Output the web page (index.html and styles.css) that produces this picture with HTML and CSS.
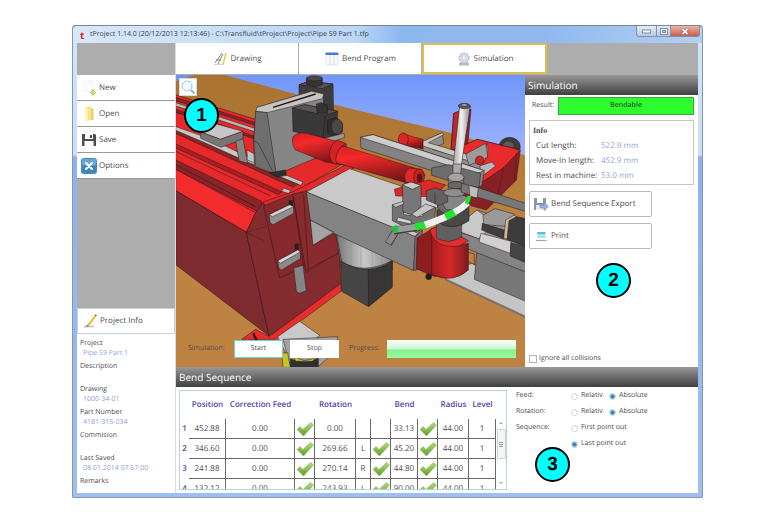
FILE: index.html
```html
<!DOCTYPE html>
<html lang="en">
<head>
  <meta charset="UTF-8">
  <meta name="viewport" content="width=device-width, initial-scale=1.0">
  <title>tProject 1.14.0</title>
  <link rel="stylesheet" href="styles.css">
</head>
<body>
  <svg class="defs" width="0" height="0" aria-hidden="true">
    <defs>
      <linearGradient id="tickFill" x1="0" y1="0" x2="0" y2="1">
        <stop offset="0" stop-color="#b4dc74"/>
        <stop offset="1" stop-color="#5f9c30"/>
      </linearGradient>
      <symbol id="tick" viewBox="0 0 18 16">
        <path d="M1 8.500 4 5.500 7 8.500 14.500 1.500 17.500 4 7.500 15z" fill="url(#tickFill)" stroke="#7fb04e" stroke-width=".5"/>
      </symbol>
    </defs>
  </svg>

  <div class="window">
    <header class="titlebar">
      <span class="app-mark">t</span>
      <h1 class="app-title">tProject 1.14.0 (20/12/2013 12:13:46) - C:\Transfluid\tProject\Project\Pipe 59 Part 1.tfp</h1>
      <div class="window-controls">
        <button class="win-btn win-min" aria-label="Minimize"><svg width="9" height="5" viewBox="0 0 9 5"><rect x=".5" y="1" width="8" height="3" fill="#fff" stroke="#7c8ca3"/></svg></button>
        <button class="win-btn win-max" aria-label="Maximize"><svg width="8" height="7" viewBox="0 0 8 7"><rect x=".5" y=".5" width="7" height="6" fill="#fff" stroke="#7c8ca3"/><rect x="2.500" y="2.500" width="3" height="2" fill="#b8c8da" stroke="#7c8ca3"/></svg></button>
        <button class="win-btn win-close" aria-label="Close"><svg width="8" height="7" viewBox="0 0 8 7"><path d="M1.500 1 6.500 6M6.500 1 1.500 6" stroke="#7a4a4a" stroke-width="3"/><path d="M1.500 1 6.500 6M6.500 1 1.500 6" stroke="#fff" stroke-width="1.800"/></svg></button>
      </div>
    </header>

    <div class="app">
      <aside class="sidebar">
        <nav class="side-menu">
          <button class="side-btn">
            <svg class="icon" viewBox="0 0 16 16"><path d="M3 1h9v10H3z" fill="#fcfcfc" stroke="#f2f2f2"/><path d="M12 9 15 12.500 12 16 9 12.500z" fill="#a9cf45"/><path d="M12 10.500v4M10 12.500h4" stroke="#d3e68c"/></svg>
            New</button>
          <button class="side-btn">
            <svg class="icon" viewBox="0 0 16 16"><path d="M4 1.500 10 0v14l-6 1.500z" fill="#f8e48d"/><path d="M10 2l2.500.8V14L10 14z" fill="#e9cf70"/><path d="M4 1.500 7 3v12.500L4 15z" fill="#fdf3bb"/></svg>
            Open</button>
          <button class="side-btn">
            <svg class="icon" viewBox="0 0 16 16"><path d="M1 2h13l1 1v11H1z" fill="#4a4d52"/><path d="M4 2h8v5H4z" fill="#fff"/><path d="M9 3h2v3H9z" fill="#4a4d52"/><path d="M3.500 9h9v5h-9z" fill="#fff"/></svg>
            Save</button>
          <button class="side-btn">
            <svg class="icon" viewBox="0 0 16 16"><rect x=".5" y=".5" width="15" height="15" rx="2" fill="#3f86bd" stroke="#4a88b8"/><path d="M1 1h14v6Q8 9 1 7z" fill="#6aa6d2"/><path d="M5 5 11 11M11 5 5 11" stroke="#fff" stroke-width="2" stroke-linecap="round"/></svg>
            Options</button>
        </nav>
        <button class="side-btn project-btn">
          <svg class="icon" viewBox="0 0 16 16"><path d="M2 13.500h10" stroke="#c9c9c9" stroke-width="2"/><path d="M5 12 12.500 2.500l1.500 1.300L7 13z" fill="#f0bd2e"/><path d="M12.500 2.500l1.500 1.300.8-1.200L13.400 1.300z" fill="#c24a32"/><path d="M5 12l2 1-2.800.7z" fill="#555"/></svg>
          Project Info</button>
        <dl class="project-info">
          <dt>Project</dt><dd>Pipe 59 Part 1</dd>
          <dt>Description</dt><dd></dd>
          <dt>Drawing</dt><dd>1000-34-01</dd>
          <dt>Part Number</dt><dd>4181-315-034</dd>
          <dt>Commision</dt><dd></dd>
          <dt>Last Saved</dt><dd>08.01.2014 07:57:00</dd>
          <dt>Remarks</dt>
        </dl>
      </aside>

      <main class="workspace">
        <nav class="tabs">
          <button class="tab">
            <svg class="icon" viewBox="0 0 16 16"><path d="M2 12 9 2M5 13 10 3M3 9h5" stroke="#777" fill="none" stroke-width=".9"/><path d="M10 13.500 13 2" stroke="#e6d13c" stroke-width="1.500"/><path d="M1 13.500h9" stroke="#d5d5d5"/></svg>
            Drawing</button>
          <button class="tab">
            <svg class="icon" viewBox="0 0 16 16"><path d="M2 3h4v11H2zM6 3h4v11H6zM10 3h4v11h-4z" fill="#f8fafd" stroke="#d5dbe6" stroke-width=".7"/><path d="M1.500 1.500h13v2.500h-13z" fill="#3f7ecb"/></svg>
            Bend Program</button>
          <button class="tab tab-active">
            <svg class="icon" viewBox="0 0 16 16"><path d="M3 12q5-2 10 0l0 2.500H3z" fill="#b5b9c2"/><circle cx="8" cy="7" r="4.800" fill="#dfe5ef" stroke="#bcc5d4" stroke-width="1.800" stroke-dasharray="2.200 .8"/><circle cx="8" cy="7" r="2.300" fill="#f5f8fc" stroke="#b9c6dc"/></svg>
            Simulation</button>
        </nav>

        <div class="stage">
          <section class="viewport">
            <svg class="scene" viewBox="1 15 1047 876" role="img" aria-label="Bending machine">
              <defs>
                <linearGradient id="sky" x1="0" y1="0" x2="0" y2="1"><stop offset="0" stop-color="#6f95fb"/><stop offset="1" stop-color="#a0b4fd"/></linearGradient>
                <linearGradient id="ground" x1="0" y1="0" x2="0" y2="1"><stop offset="0" stop-color="#a9722f"/><stop offset=".6" stop-color="#bf8443"/><stop offset="1" stop-color="#bd8241"/></linearGradient>
                <linearGradient id="tube" x1="0" y1="0" x2=".35" y2="1"><stop offset="0" stop-color="#d81e20"/><stop offset=".35" stop-color="#f5292a"/><stop offset="1" stop-color="#7d1618"/></linearGradient>
                <linearGradient id="drum" x1="0" y1="0" x2="1" y2="0"><stop offset="0" stop-color="#747474"/><stop offset=".5" stop-color="#c9c9c9"/><stop offset="1" stop-color="#8a8a8a"/></linearGradient>
                <linearGradient id="redDrum" x1="0" y1="0" x2="1" y2="0"><stop offset="0" stop-color="#a01c1f"/><stop offset=".5" stop-color="#d8282a"/><stop offset="1" stop-color="#7b1b1d"/></linearGradient>
                <linearGradient id="rod" x1="0" y1="0" x2="1" y2="0"><stop offset="0" stop-color="#a5a5a5"/><stop offset=".5" stop-color="#f0f0f0"/><stop offset="1" stop-color="#8b8b8b"/></linearGradient>
              </defs>
              <rect x="0" y="0" width="1050" height="900" fill="url(#ground)"/>
              <path d="M130 10H1050V256L830 190 480 105z" fill="url(#sky)"/>
              <path d="M0 10H70L0 34z" fill="#6f92fb"/>

              <g stroke="#2a1414" stroke-width="1.500" stroke-linejoin="round">
                <!-- machine bed -->
                <path d="M0 74 240 148 350 262 520 270 350 372 258 402 212 487 0 362z" fill="#e62a2c"/>
                <path d="M0 82 240 158V166L0 92z" fill="#8a2528"/>
                <path d="M0 98 240 176V186L0 108z" fill="#b9b9b9"/>
                <path d="M0 118 240 200V208L0 127z" fill="#7d2226"/>
                <path d="M0 172 370 340 352 352 0 190z" fill="#8a2528"/>
                <path d="M0 170 100 205 232 268 270 290V300L225 280 96 222 0 181z" fill="#c8c8c8"/>
                <path d="M0 222 320 366 308 374 0 234z" fill="#a82024"/>
                <path d="M0 244 285 378" fill="none"/>
                <path d="M0 270 258 394 252 428 0 298z" fill="#8b2428"/>
                <path d="M0 284 240 410" fill="none"/>
                <path d="M0 298 240 428 212 487 0 362z" fill="#f22b2d"/>
                <path d="M0 362 212 487 280 798 0 584z" fill="#7e2b30"/>
                <path d="M212 487 240 428 258 402 350 368 395 362 490 500 496 645 280 798z" fill="#842b30"/>
                <path d="M262 396 350 366 520 280 540 292 396 366 380 372 268 408z" fill="#e12a2c"/>
                <path d="M212 487 270 470M212 487 265 512M390 610 490 545" fill="none" stroke-width="1"/>
                <path d="M264 408 352 372 384 590 312 624z" fill="#86282c"/>
                <path d="M352 372 394 362 410 470 484 490 490 548 390 602z" fill="#8a2a2e"/>
                <path d="M384 376 398 596" fill="none"/>
                <path d="M496 640V664L300 808H198L240 778 280 800z" fill="#e82c2e"/>
                <path d="M233 790 243 812" stroke-width="7"/>

                <!-- brackets -->
                <path d="M280 434 342 404 354 410V430L292 464 283 458z" fill="#8f8f8f"/><path d="M280 434 342 404 354 410 290 440z" fill="#d4d4d4"/>
                <path d="M306 572 366 540 374 546V566L318 600 310 596z" fill="#8a8a8a"/><path d="M306 572 366 540 374 546 314 580z" fill="#d4d4d4"/>
                <path d="M354 594 382 586 392 662 372 670 362 664z" fill="#858585"/>
                <path d="M340 392h12v12h-12zM358 522h10v16h-10z" fill="#222"/>
                <path d="M75 186 100 156 202 184 134 208z" fill="#c6c6c6"/>
                <path d="M75 186 134 208 202 184V208L136 232 75 205z" fill="#777"/>
                <path d="M180 214 202 206 216 280 190 272z" fill="#858585"/>
                <path d="M214 240 285 278V300L215 270z" fill="#c2c2c2"/>
                <path d="M318 364 324 354 346 362 338 370zM314 308 382 336 376 346 308 318z" fill="#c2c2c2"/>

                <!-- back plate and servo blocks -->
                <path d="M370 44 400 34 472 42 474 140 370 122z" fill="#3c3c3c"/>
                <path d="M370 44 400 34 472 42 440 56z" fill="#555"/>
                <path d="M392 24v20q24 12 48 0V24z" fill="#333"/><ellipse cx="416" cy="25" rx="24" ry="8" fill="#484848"/>
                <path d="M244 112 408 64 444 72 440 256 302 314 236 290 234 210z" fill="#868686"/>
                <path d="M244 112 408 64 444 72 440 86 274 128 240 124z" fill="#c4c4c4"/>
                <path d="M240 124 274 128 302 314 240 290 234 212z" fill="#6e6e6e"/>
                <path d="M292 112 420 72" stroke-width="4"/><path d="M234 212 248 220 290 302" fill="none"/>
                <path d="M280 308 330 300 332 316 304 322z" fill="#26302e"/>
                <path d="M350 114 388 104 486 124 482 194 438 206 352 184z" fill="#393939"/>
                <path d="M350 114 388 104 486 124 448 136z" fill="#565656"/><path d="M448 136 442 204" fill="none"/>
                <path d="M422 102 436 98 456 106V132L424 128z" fill="#333"/>
                <path d="M455 150 482 142 500 160V186L478 198 456 190z" fill="#2d2d2d"/><ellipse cx="484" cy="170" rx="17" ry="23" fill="#484848"/>
                <path d="M440 206 505 190 508 202 470 216z" fill="#989898"/>

                <!-- table block and motor below -->
                <path d="M480 490 650 560V600H498z" fill="#777"/>
                <path d="M480 480 498 574Q560 616 650 572V540z" fill="url(#drum)"/>
                <path d="M526 510v78M556 520v76M590 540v56M618 550v38" stroke="#888" stroke-width="1"/>
                <path d="M496 574Q540 600 578 598L579 710 498 664z" fill="#454545"/>
                <path d="M578 598Q620 594 650 572V652L579 710z" fill="#363636"/>
                <path d="M392 366 522 296 800 390 718 500z" fill="#c9c9c9"/>
                <path d="M392 366 720 500 714 602 474 490 412 526 404 450z" fill="#838383"/>
                <path d="M718 500 740 480 730 598 714 602z" fill="#707070"/>
                <path d="M404 450 474 486 412 526z" fill="#a4a4a4"/><path d="M404 450 474 488" fill="none" stroke-width="1"/>

                <!-- rear arm -->
                <ellipse cx="1002" cy="230" rx="32" ry="28" fill="#3c3c3c"/><ellipse cx="998" cy="228" rx="18" ry="15" fill="#5c5c5c"/>
                <path d="M834 130 886 118 874 248 826 240z" fill="#8f1f22"/><path d="M834 130 852 122 846 240 826 240z" fill="#c02629"/>
                <path d="M820 246 905 208 1034 240 1022 330 932 420 860 400z" fill="#872024"/>
                <path d="M820 246 905 208 1034 240 985 292 914 340 840 300z" fill="#ea2b2d"/>
                <path d="M985 290 966 376M1022 250 1016 338" fill="none" stroke-width="1"/>
                <path d="M680 190 710 200 742 208V236L708 230 678 224z" fill="url(#tube)"/><ellipse cx="683" cy="208" rx="15" ry="19" fill="#d82729"/>
                <path d="M742 214 800 188 804 220 770 238 924 282 912 310 742 244z" fill="#8e8e8e"/>
                <path d="M742 214 800 188 804 194 758 218 918 266 936 220V250L920 286 742 228z" fill="#c8c8c8"/>
                <path d="M870 252 930 220 936 262 880 286z" fill="#9b9b9b"/><path d="M912 288 948 276 960 288 920 318z" fill="#b8b8b8"/>
                <circle cx="912" cy="271" r="13" fill="#c72527"/>
                <path d="M554 202 592 194 926 302 918 350 556 234z" fill="#838383"/>
                <path d="M554 202 592 194 926 302 900 312z" fill="#cdcdcd"/>
                <path d="M768 294 820 284 915 310 910 352 870 348 768 316z" fill="#6d6d6d"/>

                <!-- feed tube -->
                <path d="M352 200Q370 184 392 190L512 222 506 286 450 276 360 240Q346 220 352 200z" fill="url(#tube)"/>
                <path d="M476 228 508 230 724 296 704 342 474 276z" fill="url(#tube)"/>
                <path d="M470 278Q446 240 484 210L510 220Q474 240 482 284z" fill="#d22426"/>
                <path d="M700 294 738 298 748 316 728 344 690 336Q680 312 700 294z" fill="#e22729"/><ellipse cx="730" cy="322" rx="16" ry="25" fill="#c91f22"/><ellipse cx="732" cy="324" rx="7" ry="13" fill="#5b1517"/>
                <path d="M656 358 680 350 760 330 810 345 770 380 660 378z" fill="#dd282a"/>

                <!-- right slide -->
                <path d="M830 596 890 580 1050 690V742L810 630z" fill="#c5c5c5"/><path d="M810 628 1050 740" stroke-width="5" stroke="#777"/>
                <path d="M904 540 1050 590V694L896 628z" fill="#787878"/>
                <path d="M874 546 896 552V584L874 572z" fill="#bd8241"/>
                <path d="M832 478 904 420 1050 470V582L834 506z" fill="#9b9b9b"/>
                <path d="M832 478 904 420 960 462 908 506z" fill="#c9c9c9"/><path d="M908 506 1050 556V606L834 520V480z" fill="#858585"/>
                <path d="M916 490 1006 514 1004 550 910 516z" fill="#d1d1d1"/>
                <path d="M922 436 958 416 1016 432 1002 470 924 464z" fill="#9a9a9a"/><path d="M920 460 986 480 984 506 918 480z" fill="#3e3e3e"/>
                <path d="M990 450 1014 436 1024 440 994 508 984 504z" fill="#cdb98d"/>
                <path d="M1000 452 1022 440 1050 446V530L994 508z" fill="#3b3b3b"/><path d="M1006 518 1050 530V578L1004 558z" fill="#444"/>

                <!-- bend head -->
                <path d="M724 504 780 470V620L758 612 722 596z" fill="#8e1d20"/>
                <path d="M768 474Q820 540 878 520V600Q834 642 768 614z" fill="url(#redDrum)"/>
                <path d="M762 480Q780 538 850 528L878 512 790 466z" fill="#ea2a2c"/>
                <path d="M782 460v44q36 22 76-4V450z" fill="#606060"/>
                <path d="M784 420v36q48 30 96-4V390z" fill="#484848"/>
                <ellipse cx="830" cy="404" rx="46" ry="30" fill="#6a6a6a"/>
                <path d="M790 384 838 364 880 384 866 416 812 420z" fill="#858585"/>
                <path d="M752 362 780 354 816 366V396L790 406 752 390z" fill="#616161"/><path d="M778 368v34" fill="none"/>
                <path d="M650 406 684 396V434L740 440 750 404 780 412 776 448 722 488 650 452z" fill="#737373"/>
                <path d="M680 344 706 336 736 346V410L708 434 682 426z" fill="#777"/><path d="M680 344 706 336 736 346 710 358z" fill="#c9c9c9"/>
                <path d="M650 404 682 394 684 402 660 412zM708 432 750 402 778 412 724 442z" fill="#c4c4c4"/><path d="M668 442 706 452V462L662 452z" fill="#d5d5d5"/>

                <!-- vertical spindle and side arm -->
                <path d="M852 108H884L856 290H832z" fill="url(#rod)"/>
                <ellipse cx="866" cy="108" rx="18" ry="8" fill="#5a5a5a"/><ellipse cx="866" cy="105" rx="9" ry="4" fill="#aaa"/>
                <path d="M832 282h26l-4 36h-22z" fill="#a9a9a9"/>
                <path d="M818 322v42q24 16 46 0v-42z" fill="#7d7d7d"/><ellipse cx="841" cy="322" rx="24" ry="13" fill="#a4a4a4"/>
                <ellipse cx="841" cy="346" rx="24" ry="11" fill="#666"/><ellipse cx="836" cy="368" rx="32" ry="12" fill="#8e8e8e"/>
                <path d="M858 340 904 352 1050 400V424L900 380 856 366z" fill="#777"/><path d="M880 346 908 354 904 384 882 378z" fill="#bdbdbd"/>

                <!-- motor foot -->
                <path d="M306 800 372 754 432 796 340 870z" fill="#c9c9c9"/>
                <path d="M322 808 344 890H428L486 836V800z" fill="#a2a2a2"/><path d="M344 866Q390 886 428 864V892H344z" fill="#2f2f2f"/>
                <path d="M318 850 336 848 344 892H322zM350 850Q384 890 426 856L410 874H360z" fill="#c6c524"/>
                <circle cx="759" cy="620" r="9" fill="#1d1d1d"/>
              </g>

              <!-- pipe -->
              <g fill="none">
                <path d="M638 522 660 484" stroke="#3c3c3c" stroke-width="22"/>
                <path d="M638 520 660 484" stroke="#8a8a8a" stroke-width="17"/>
                <path d="M654 482 722 471" stroke="#3c3c3c" stroke-width="24"/>
                <path d="M654 480 722 470" stroke="#9c9c9c" stroke-width="18"/>
                <path d="M650 480 666 474" stroke="#23c33c" stroke-width="20"/>
                <path d="M718 470 750 465" stroke="#1fe52c" stroke-width="21"/>
                <path d="M748 465Q790 450 812 440" stroke="#f0f0f0" stroke-width="21"/>
                <path d="M810 441 838 426" stroke="#1fe52c" stroke-width="22"/>
                <path d="M836 427Q862 412 876 398" stroke="#f0f0f0" stroke-width="19"/>
                <path d="M872 402Q880 390 880 378" stroke="#1fe52c" stroke-width="12"/>
              </g>
            </svg>
            <button class="zoom-btn" aria-label="Zoom">
              <svg class="icon" viewBox="0 0 16 16"><circle cx="7" cy="7" r="5" fill="#f2fafd" stroke="#9fcbe1" stroke-width="1.200" stroke-dasharray="3 1"/><path d="M11 11l3.500 3.500" stroke="#7fb5d6" stroke-width="2"/></svg>
            </button>
            <span class="callout callout-1">1</span>
            <div class="sim-controls">
              <span class="sim-label">Simulation:</span>
              <button class="sim-btn sim-btn-focus">Start</button>
              <button class="sim-btn">Stop</button>
              <label class="progress-label" for="progress">Progress:</label>
              <progress class="progress" id="progress" value="100" max="100"></progress>
            </div>
          </section>

          <section class="sim-panel">
            <h2 class="panel-title">Simulation</h2>
            <div class="panel-body">
              <div class="result-row">
                <span class="result-label">Result:</span>
                <span class="result-value">Bendable</span>
              </div>
              <div class="info-box">
                <h3 class="info-title">Info</h3>
                <dl class="info-list">
                  <dt>Cut length:</dt><dd>522.9 mm</dd>
                  <dt>Move-In length:</dt><dd>452.9 mm</dd>
                  <dt>Rest in machine:</dt><dd>53.0 mm</dd>
                </dl>
              </div>
              <button class="action-btn">
                <svg class="icon" viewBox="0 0 16 16"><path d="M1 2h12v12H1z" fill="#8d95a3"/><path d="M4 2h6v5H4z" fill="#fff"/><path d="M3 9h8v5H3z" fill="#e8ebf2"/><path d="M7 9h4V6.500l4.500 4L11 14.500V12H7z" fill="#9aace0" stroke="#7a8dcb" stroke-width=".6"/></svg>
                Bend Sequence Export</button>
              <button class="action-btn">
                <svg class="icon" viewBox="0 0 16 16"><path d="M5 5h7l1 5H4z" fill="#aee2ec"/><path d="M4 5h8.500" stroke="#35a9c4" stroke-width="1.500"/><path d="M3 12.500h10.500" stroke="#9fa7ad" stroke-width="1.200"/></svg>
                Print</button>
              <label class="check-row"><input type="checkbox" class="check">Ignore all collisions</label>
            </div>
            <span class="callout callout-2">2</span>
          </section>
        </div>

        <section class="sequence">
          <h2 class="panel-title">Bend Sequence</h2>
          <div class="sequence-body">
            <div class="table-box">
              <div class="table-scroll">
                <table class="bend-table">
                  <colgroup>
                    <col class="c-num"><col class="c-pos"><col class="c-feed"><col class="c-tick"><col class="c-rot"><col class="c-dir"><col class="c-tick"><col class="c-bend"><col class="c-tick"><col class="c-rad"><col class="c-lvl">
                  </colgroup>
                  <thead>
                    <tr><th></th><th>Position</th><th>Correction Feed</th><th></th><th>Rotation</th><th></th><th></th><th>Bend</th><th></th><th>Radius</th><th>Level</th></tr>
                  </thead>
                  <tbody>
                    <tr><th>1</th><td>452.88</td><td>0.00</td><td><svg class="tick"><use href="#tick"/></svg></td><td>0.00</td><td></td><td></td><td>33.13</td><td><svg class="tick"><use href="#tick"/></svg></td><td>44.00</td><td>1</td></tr>
                    <tr><th>2</th><td>346.60</td><td>0.00</td><td><svg class="tick"><use href="#tick"/></svg></td><td>269.66</td><td>L</td><td><svg class="tick"><use href="#tick"/></svg></td><td>45.20</td><td><svg class="tick"><use href="#tick"/></svg></td><td>44.00</td><td>1</td></tr>
                    <tr><th>3</th><td>241.88</td><td>0.00</td><td><svg class="tick"><use href="#tick"/></svg></td><td>270.14</td><td>R</td><td><svg class="tick"><use href="#tick"/></svg></td><td>44.80</td><td><svg class="tick"><use href="#tick"/></svg></td><td>44.00</td><td>1</td></tr>
                    <tr><th>4</th><td>132.12</td><td>0.00</td><td><svg class="tick"><use href="#tick"/></svg></td><td>243.93</td><td>L</td><td><svg class="tick"><use href="#tick"/></svg></td><td>90.00</td><td><svg class="tick"><use href="#tick"/></svg></td><td>44.00</td><td>1</td></tr>
                  </tbody>
                </table>
              </div>
              <div class="scrollbar">
                <svg class="arrow" viewBox="0 0 6 4"><path d="M3 1 5 3H1z" fill="#aaa"/></svg>
                <div class="thumb"></div>
                <svg class="arrow arrow-down" viewBox="0 0 6 4"><path d="M3 3 5 1H1z" fill="#aaa"/></svg>
              </div>
            </div>

            <form class="options">
              <span>Feed:</span>
              <label class="radio-row"><input type="radio" name="feed" class="radio">Relativ</label>
              <label class="radio-row"><input type="radio" name="feed" class="radio" checked>Absolute</label>
              <span>Rotation:</span>
              <label class="radio-row"><input type="radio" name="rotation" class="radio">Relativ</label>
              <label class="radio-row"><input type="radio" name="rotation" class="radio" checked>Absolute</label>
              <span>Sequence:</span>
              <label class="radio-row wide"><input type="radio" name="sequence" class="radio">First point out</label>
              <label class="radio-row wide"><input type="radio" name="sequence" class="radio" checked>Last point out</label>
            </form>
          </div>
          <span class="callout callout-3">3</span>
        </section>
      </main>
    </div>
  </div>
</body>
</html>
```
FILE: styles.css
```css
:root {
  --text: #4c4c4c;
  --value: #93a2dc;
  --heading: #4b45a8;
  --gray: #adadad;
  --line: #b9b9b9;
}

* {
  box-sizing: border-box;
}

body {
  margin: 0;
  padding: 25px 65px 18px 72px;
  background: #fff;
  color: var(--text);
  font-family: "Open Sans", "Noto Sans", sans-serif;
  font-size: 8px;
  line-height: 12px;
  text-rendering: geometricPrecision;
}

button {
  font: inherit;
  color: inherit;
  text-rendering: inherit;
  padding: 0;
  margin: 0;
  cursor: pointer;
}

h1, h2, h3, dl, dd {
  margin: 0;
  font-weight: 400;
}

.defs {
  position: absolute;
}

.icon {
  width: 16px;
  height: 16px;
  flex: none;
}

/* Window frame */
.window {
  padding: 0 5px 5px;
  border-radius: 4px 4px 2px 2px;
  background: linear-gradient(180deg, #d3e5f8 0, #c9dff6 130px, #8db2ea 132px, #9fc0ee 100%);
  box-shadow: inset 0 0 0 1px #8496b4;
}

.titlebar {
  display: flex;
  align-items: center;
  height: 18px;
  margin: 0 -4px;
  padding-left: 7px;
  border-top: 1px solid #75869b;
  border-radius: 4px 4px 0 0;
  background: linear-gradient(90deg, #d9e8f8 0, #bdd7f6 45%, #8db8ee 52%, #90b9ee 75%, #b4d0f2 100%);
}

.app-mark {
  width: 10px;
  color: #d8272b;
  font-size: 10px;
  font-weight: 700;
}

.app-title {
  flex: 1;
  font-size: 7px;
  color: #33404f;
  white-space: nowrap;
}

.window-controls {
  display: flex;
  align-self: flex-start;
  margin-right: 2px;
}

.win-btn {
  display: flex;
  align-items: center;
  justify-content: center;
  height: 11px;
  border: 1px solid #8291a8;
  border-top: 0;
  background: linear-gradient(#e5eef8, #b7cae1);
}

.win-min {
  width: 21px;
  border-radius: 0 0 0 3px;
}

.win-max {
  width: 14px;
  border-left: 0;
}

.win-close {
  width: 29px;
  border-left: 0;
  border-radius: 0 0 3px 0;
  background: linear-gradient(#eab5aa, #d05a48);
}

/* Layout */
.app {
  display: flex;
  background: #fff;
}

.sidebar {
  display: flex;
  flex-direction: column;
  width: 99px;
  padding-top: 32px;
  border-right: 1px solid #dcdcdc;
  background: var(--gray);
}

.side-menu {
  flex: 1;
}

.side-btn {
  display: flex;
  align-items: center;
  gap: 2px;
  width: 100%;
  height: 26px;
  padding-left: 4px;
  border: 0;
  border-bottom: 1px solid #999;
  background: #fff;
}

.project-btn {
  border: 1px solid #c4d4d8;
}

.project-info {
  height: 159px;
  padding: 4px 3px 0;
  background: #fff;
  font-size: 7px;
  line-height: 12px;
}

.project-info dd {
  height: 11px;
  padding-left: 3px;
  line-height: 8px;
  color: var(--value);
}

.workspace {
  flex: 1;
  min-width: 0;
}

.tabs {
  display: flex;
  gap: 1px;
  height: 32px;
  padding-bottom: 1px;
  background: var(--gray);
}

.tab {
  display: flex;
  align-items: center;
  justify-content: center;
  gap: 2px;
  width: 122px;
  border: 0;
  background: #fff;
}

.tab-active {
  width: 125px;
  border: 2px solid #dfbd4d;
}

.stage {
  display: flex;
}

/* Machine view */
.viewport {
  position: relative;
  flex: 1;
}

.scene {
  display: block;
  width: 100%;
}

.zoom-btn {
  position: absolute;
  top: 3px;
  left: 3px;
  display: flex;
  align-items: center;
  justify-content: center;
  width: 18px;
  height: 18px;
  border: 1px solid #d6dbe0;
  background: #fff;
}

.sim-controls {
  position: absolute;
  left: 12px;
  right: 9px;
  bottom: 9px;
  display: flex;
  align-items: center;
  font-size: 7px;
}

.sim-label {
  width: 46px;
}

.sim-btn {
  width: 49px;
  height: 18px;
  margin-right: 7px;
  border: 0;
  background: #fff;
}

.sim-btn-focus {
  border: 1px solid #6fcfd8;
}

.progress-label {
  width: 41px;
  padding-left: 3px;
}

.progress {
  appearance: none;
  flex: 1;
  min-width: 0;
  height: 18px;
  border: 0;
}

.progress::-webkit-progress-bar {
  background: #fff;
}

.progress::-webkit-progress-value {
  background: linear-gradient(#fff 0, #c9f5cf 50%, #84f08b 55%, #9cf7a0 100%);
}

/* Simulation panel */
.panel-title {
  height: 20px;
  padding-left: 3px;
  background: linear-gradient(#989898, #3f3f3f);
  color: #fff;
  font-size: 10px;
  line-height: 20px;
}

.sim-panel {
  position: relative;
  display: flex;
  flex-direction: column;
  width: 173px;
}

.panel-body {
  flex: 1;
  display: flex;
  flex-direction: column;
  padding: 2px 4px;
}

.result-row {
  display: flex;
  align-items: center;
  height: 18px;
  font-size: 7px;
}

.result-label {
  width: 29px;
  padding-left: 3px;
}

.result-value {
  flex: 1;
  border: 1px solid #4c9a4c;
  background: #2cfb2e;
  color: #285c28;
  font-weight: 600;
  line-height: 16px;
  text-align: center;
}

.info-box {
  height: 65px;
  margin: 5px 0 6px;
  padding: 2px 3px;
  border: 1px solid #c6c6c6;
}

.info-title {
  font-family: "Liberation Serif", serif;
  font-size: 8px;
  font-weight: 700;
  line-height: 15px;
}

.info-list {
  display: grid;
  grid-template-columns: 65px 1fr;
  padding-left: 3px;
  line-height: 15px;
}

.info-list dd {
  color: var(--value);
}

.action-btn {
  display: flex;
  align-items: center;
  gap: 2px;
  width: 123px;
  height: 26px;
  margin-bottom: 6px;
  padding-left: 3px;
  border: 1px solid var(--line);
  border-radius: 2px;
  background: #fff;
}

.check-row {
  display: flex;
  align-items: center;
  gap: 2px;
  margin-top: auto;
  font-size: 7px;
}

.check {
  appearance: none;
  width: 8px;
  height: 8px;
  margin: 0;
  border: 1px solid #b5b5b5;
  background: #fff;
}

/* Bend sequence */
.sequence {
  position: relative;
}

.sequence-body {
  display: flex;
  gap: 9px;
  padding: 3px;
}

.table-box {
  flex: 1;
  display: flex;
  height: 100px;
  min-width: 0;
  border: 1px solid #b5d3dc;
  overflow: hidden;
}

.table-scroll {
  flex: 1;
  overflow: hidden;
}

.bend-table {
  width: 100%;
  table-layout: fixed;
  border-collapse: separate;
  border-spacing: 0;
  text-align: center;
}

.c-num { width: 9px; }
.c-pos { width: 37px; }
.c-feed { width: 69px; }
.c-tick { width: 20px; }
.c-rot { width: 41px; }
.c-dir { width: 15px; }
.c-bend { width: 27px; }
.c-rad { width: 31px; }
.c-lvl { width: 27px; }

.bend-table th,
.bend-table td {
  height: 20px;
  padding: 0;
  white-space: nowrap;
}

.bend-table th {
  color: var(--heading);
  font-weight: 600;
}

.bend-table thead th {
  height: 28px;
}

.bend-table td {
  border-right: 1px solid #6a6a6a;
  border-bottom: 1px solid #6a6a6a;
}

.tick {
  display: block;
  width: 18px;
  height: 16px;
  margin: 0 auto;
}

.scrollbar {
  display: flex;
  flex-direction: column;
  align-items: center;
  width: 10px;
  padding: 30px 0 4px;
}

.arrow {
  width: 6px;
  height: 4px;
}

.thumb {
  width: 9px;
  height: 30px;
  margin-top: 4px;
  border: 1px solid #cfcfcf;
  border-radius: 1px;
  background: repeating-linear-gradient(#999 0 1px, #f5f5f5 1px 2px) center / 4px 5px no-repeat #f5f5f5;
}

.arrow-down {
  margin-top: auto;
}

.options {
  display: grid;
  grid-template-columns: 55px 38px 1fr;
  grid-auto-rows: 16px;
  align-content: start;
  align-items: center;
  width: 179px;
  margin-top: -2px;
  font-size: 7px;
}

.radio-row {
  display: flex;
  align-items: center;
  gap: 3px;
}

.wide {
  grid-column: 2 / 4;
}

.radio {
  appearance: none;
  width: 7px;
  height: 7px;
  margin: 0;
  border: 1px solid #d0d0d0;
  border-radius: 50%;
  background: #fff;
}

.radio:checked {
  border-color: #b4cddd;
  background: radial-gradient(circle, #2f80b4 0 1px, #c2e0f0 3px);
}

/* Numbered markers */
.callout {
  position: absolute;
  width: 35px;
  height: 35px;
  border: 2px solid #000;
  border-radius: 50%;
  background: #0ff;
  color: #000;
  font-family: "Liberation Sans", sans-serif;
  font-size: 19px;
  font-weight: 700;
  line-height: 31px;
  text-align: center;
}

.callout-1 {
  top: 23px;
  left: 8px;
}

.callout-2 {
  top: 188px;
  left: 71px;
}

.callout-3 {
  top: 80px;
  right: 128px;
}
```
